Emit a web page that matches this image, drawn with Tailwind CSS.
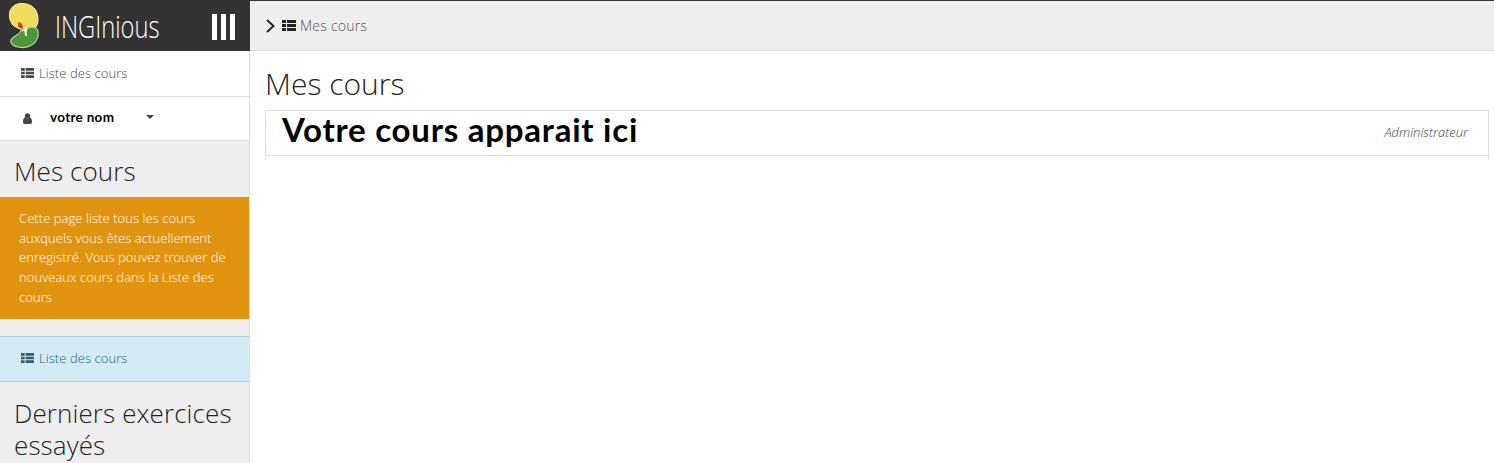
<!DOCTYPE html>
<html lang="fr">
<head>
<meta charset="utf-8">
<title>INGInious</title>
<script src="https://cdn.jsdelivr.net/npm/@tailwindcss/browser@4"></script>
</head>
<body class="flex h-[463px] w-[1494px] overflow-hidden bg-white font-['Open_Sans',sans-serif] text-[13px] font-light text-[#444]">
<svg class="hidden">
  <symbol id="list" viewBox="0 0 14 11" preserveAspectRatio="none"><path d="M0 0h4v3H0zM5 0h9v3H5zM0 4h4v3H0zM5 4h9v3H5zM0 8h4v3H0zM5 8h9v3H5z" fill="currentColor"/></symbol>
</svg>
<aside class="flex h-full w-[250px] shrink-0 flex-col">
  <header class="flex h-[51px] shrink-0 items-start bg-[#333]">
    <svg class="ml-2 mt-[2px] h-[47px] w-8 shrink-0" viewBox="0 0 32 47">
      <path d="M8 2.500C14 0 23 2 27 7C31 13 31 22 27 26C20 29 9 28 4 22C0 16 0 6 8 2.500Z" fill="#efdb5e" stroke="#f4efbb" stroke-width="1"/>
      <path d="M13 28C16 31 19 25 24 25C29 25 31 29 30 34C28 43 20 46 13 45.500C6 45 2 42 3 38C5 34 12 33 13 28Z" fill="#4f963a" stroke="#b5d89c" stroke-width="1.2"/>
      <path d="M10.500 20C13 20 15 23 15 27L10 25Z" fill="#c74612"/>
      <path d="M17 26C15 28 17 30 17 34L19 34C18 30 20 28 19 26Z" fill="#edf3df"/>
    </svg>
    <span class="ml-[15px] mt-[4px] w-[105px] origin-left scale-x-[0.765] whitespace-nowrap text-[31px] leading-[45px] text-white">INGInious</span>
    <div class="ml-[52px] mt-[14px] flex shrink-0 gap-1"><i class="h-[26px] w-[5px] bg-white"></i><i class="h-[26px] w-[5px] bg-white"></i><i class="h-[26px] w-[5px] bg-white"></i></div>
  </header>
  <div class="min-h-0 flex-1 border-r border-[#ddd] bg-[#eee]">
    <div class="flex h-[46px] items-center border-b border-[#ddd] bg-white pl-[21px]">
      <svg class="mb-px h-[10px] w-[13px] text-[#434852]"><use href="#list"/></svg><span class="ml-[5px] tracking-[0.07px]">Liste des cours</span>
    </div>
    <div class="flex h-[44px] items-center border-b border-[#ddd] bg-white pl-[23px]">
      <svg class="h-[11px] w-[9px] shrink-0" viewBox="0 0 9 11" fill="#434852"><circle cx="4.500" cy="2.900" r="2.700"/><path d="M1.800 4.500Q4.500 6.500 7.200 4.500Q9 5 9 9Q9 11 7.500 11H1.500Q0 11 0 9Q0 5 1.800 4.500Z"/></svg>
      <span class="-mt-[2px] ml-[18px] w-[64px] whitespace-nowrap font-['Lato',sans-serif] text-[13.500px] font-bold tracking-[0.3px] text-black">votre nom</span>
      <svg class="ml-[32px] mb-[3px] h-1 w-2" viewBox="0 0 8 4"><path d="M0 0H8L4 4Z" fill="#444"/></svg>
    </div>
    <h2 class="flex h-[56px] items-center pl-[14px] pt-[5px] text-[26px] tracking-[0.1px] text-[#222]">Mes cours</h2>
    <p class="h-[122px] whitespace-nowrap bg-[#e19410] pl-[19px] pt-[12px] leading-[19.700px] tracking-[0.06px] text-white">Cette page liste tous les cours<br>auxquels vous êtes actuellement<br>enregistré. Vous pouvez trouver de<br>nouveaux cours dans la Liste des<br>cours</p>
    <div class="mt-[17px] flex h-[46px] items-center border-y border-[#b5ccd7] bg-[#d3ebf5] pl-[21px] text-[#315f74]">
      <svg class="mb-[2px] h-[10px] w-[13px]"><use href="#list"/></svg><span class="ml-[5px] tracking-[0.07px]">Liste des cours</span>
    </div>
    <h2 class="whitespace-nowrap pl-[14px] pt-[15px] text-[26px] leading-8 tracking-[0.1px] text-[#222]">Derniers exercices<br>essayés</h2>
  </div>
</aside>
<main class="min-w-0 flex-1">
  <nav class="flex h-[51px] items-center border-b border-t border-t-[#333] border-b-[#ddd] bg-[#eee] pl-[16px] text-[14px] text-[#555]">
    <svg class="h-[14px] w-[9px]" viewBox="0 0 9 14"><path d="M1 1L7.500 7L1 13" fill="none" stroke="#222" stroke-width="1.900"/></svg>
    <svg class="ml-[7px] h-[11px] w-[14px] text-[#222]"><use href="#list"/></svg><span class="ml-1 tracking-[0.25px]">Mes cours</span>
  </nav>
  <h1 class="mt-[14px] pl-[15px] text-[30px] leading-[38px] text-[#222]">Mes cours</h1>
  <section class="ml-[15px] mr-[5px] mt-[7px] h-[49px] border-x border-t border-[#ddd]">
    <div class="flex h-[45px] items-center justify-between border-b border-[#ddd] pl-[16px] pr-[20px]">
      <strong class="-mt-[8px] whitespace-nowrap font-['Lato',sans-serif] text-[33px] font-bold leading-[40px] tracking-[0.76px] text-black">Votre cours apparait ici</strong>
      <em class="text-[13px] text-[#444]">Administrateur</em>
    </div>
  </section>
</main>
</body>
</html>
